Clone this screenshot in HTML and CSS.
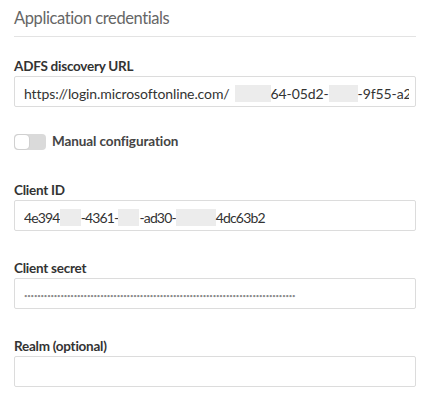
FILE: index.html
```html
<!DOCTYPE html>
<html>
<head>
<meta charset="utf-8">
<link rel="stylesheet" href="styles.css">
</head>
<body>
<div class="panel">
  <h2 class="title">Application credentials</h2>
  <div class="field first">
    <div class="label">ADFS discovery URL</div>
    <div class="input"><div class="value">https://login.microsoftonline.com/<span class="redact gap" style="width:36px"></span>64-05d2-<span class="redact" style="width:29px"></span>-9f55-a2ae</div></div>
  </div>
  <div class="toggle-row">
    <span class="toggle"><span class="knob"></span></span>
    <span class="toggle-label">Manual configuration</span>
  </div>
  <div class="field">
    <div class="label">Client ID</div>
    <div class="input"><div class="value digits">4e394<span class="redact" style="width:21px"></span>-4361-<span class="redact" style="width:21px"></span>-ad30-<span class="redact" style="width:40px"></span>4dc63b2</div></div>
  </div>
  <div class="field">
    <div class="label">Client secret</div>
    <div class="input"><div class="value"><span class="dots">••••••••••••••••••••••••••••••••••••••••••••••••••••••••••••••••••••••••••••••••••</span></div></div>
  </div>
  <div class="field">
    <div class="label">Realm (optional)</div>
    <div class="input"><div class="value"></div></div>
  </div>
</div>
</body>
</html>
```
FILE: styles.css
```css
html, body {
  margin: 0;
  padding: 0;
  background: #fff;
}
body {
  font-family: Lato, "Noto Sans", sans-serif;
  color: #333;
}
.panel {
  width: 402px;
  padding: 0 0 0 14px;
  display: flex;
  flex-direction: column;
}
.title {
  margin: 0;
  padding-top: 7px;
  font-size: 16.5px;
  font-weight: 400;
  letter-spacing: -0.4px;
  color: #666;
  line-height: 22px;
  padding-bottom: 7px;
  border-bottom: 1px solid #e3e3e3;
}
.field {
  display: flex;
  flex-direction: column;
  margin-top: 27px;
}
.field.first {
  margin-top: 19px;
}
.label {
  font-size: 13.5px;
  font-weight: 700;
  line-height: 20px;
  letter-spacing: -0.25px;
  color: #333;
}
.input {
  height: 27px;
  padding: 2px 6px 0 9px;
  border: 1px solid #dcdcdc;
  border-radius: 2px;
  box-sizing: content-box;
}
.value {
  height: 27px;
  font-size: 14px;
  line-height: 29px;
  letter-spacing: -0.1px;
  color: #333;
  white-space: nowrap;
  overflow: hidden;
}
.value.digits {
  letter-spacing: -0.85px;
}
.redact {
  display: inline-block;
  height: 17px;
  background: #ececec;
  vertical-align: -3px;
}
.redact.gap {
  margin-left: 5px;
}
.dots {
  font-size: 6px;
  letter-spacing: -0.17px;
  color: #8a8a8a;
  vertical-align: 3px;
}
.toggle-row {
  display: flex;
  align-items: center;
  gap: 6px;
  margin-top: 26px;
  margin-bottom: 3px;
}
.toggle {
  width: 32px;
  height: 16px;
  border-radius: 4px;
  background: #dadada;
  display: flex;
  align-items: center;
  padding: 0 1px;
  box-sizing: border-box;
}
.knob {
  width: 14px;
  height: 14px;
  border-radius: 4px;
  background: #fff;
  box-shadow: 0 0 0 1px #d0d0d0;
}
.toggle-label {
  font-size: 13.5px;
  font-weight: 700;
  letter-spacing: -0.1px;
  line-height: 17px;
  color: #444;
}
```
